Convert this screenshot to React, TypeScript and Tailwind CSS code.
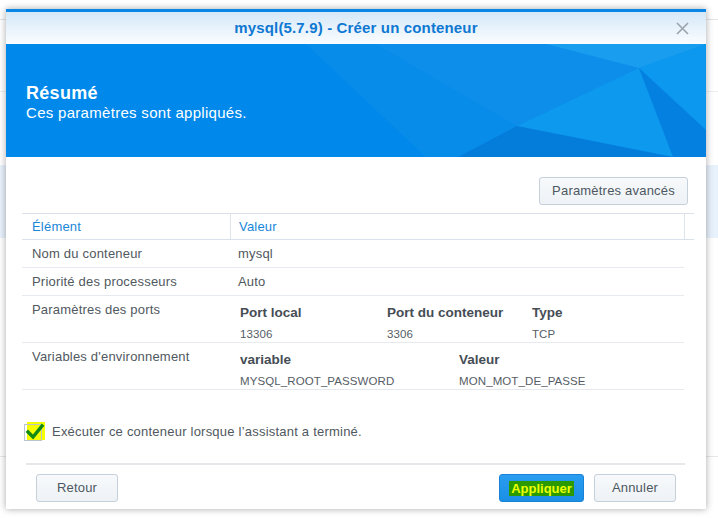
import React from "react";

function Banner() {
  return (
    <div className="relative h-[113px] bg-[#0089ea] overflow-hidden">
      <svg className="absolute inset-0" width="700" height="113" viewBox="0 0 700 113">
        <polygon points="300,0 700,0 700,113 420,113" fill="#ffffff" opacity="0.03" />
        <polygon points="370,0 540,0 633,24 511,82" fill="#ffffff" opacity="0.025" />
        <polygon points="540,0 700,0 633,24" fill="#2fb4f6" opacity="0.45" />
        <polygon points="633,24 700,0 700,86" fill="#0fa2f0" opacity="0.55" />
        <polygon points="633,24 511,82 667,113" fill="#14a8f2" opacity="0.45" />
        <polygon points="511,82 452,113 667,113" fill="#0068c8" opacity="0.45" />
        <polygon points="633,24 667,113 700,113 700,86" fill="#0074d4" opacity="0.45" />
      </svg>
      <div className="relative pl-[20px] pt-[38px] text-white">
        <div className="text-[18px] leading-[22px] font-bold tracking-[0.3px]">Résumé</div>
        <div className="text-[15px] leading-[18px] tracking-[0.3px]">Ces paramètres sont appliqués.</div>
      </div>
    </div>
  );
}

function Btn({ children, w }: { children: React.ReactNode; w: string }) {
  return (
    <div
      className={`${w} h-[28px] flex items-center justify-center rounded-[3px] border border-[#c5d0da] bg-gradient-to-b from-[#f7f9fb] to-[#eef2f6] text-[13px] tracking-[0.2px] text-[#4d5761]`}
    >
      {children}
    </div>
  );
}

export default function App() {
  return (
    <div className="relative w-[718px] h-[519px] overflow-hidden bg-white font-['Liberation_Sans',Arial,sans-serif]">
      {/* page behind the dialog */}
      <div className="absolute inset-0 flex flex-col">
        <div className="h-[20px] border-b border-[#e3e5e8]" />
        <div className="h-[72px] border-b border-[#eceef0]" />
        <div className="h-[73px]" />
        <div className="h-[73px] bg-[#e8f2fc]" />
        <div className="h-[219px] border-b border-[#e6e8ea]" />
      </div>

      {/* dialog */}
      <div className="absolute left-[6px] top-[9px] w-[700px] h-[500px] bg-white flex flex-col shadow-[0_0_7px_rgba(0,0,0,0.35)]">
        <div className="h-[3px] bg-[#0a87e6]" />
        <div className="relative h-[32px] flex items-center justify-center bg-gradient-to-b from-[#d4e8f8] to-[#fbfdff]">
          <span className="text-[15px] font-bold text-[#0f78d2] tracking-[0.15px]">mysql(5.7.9) - Créer un conteneur</span>
          <svg className="absolute right-[17px] top-[10px]" width="13" height="13" viewBox="0 0 13 13">
            <path d="M1 1 L12 12 M12 1 L1 12" stroke="#9aa3ab" strokeWidth="1.6" />
          </svg>
        </div>
        <Banner />

        {/* content */}
        <div className="flex flex-col pt-[20px]">
          <div className="flex justify-end pr-[18px]">
            <Btn w="w-[149px]">Paramètres avancés</Btn>
          </div>

          <div className="mt-[8px] ml-[16px] w-[672px] text-[13px] tracking-[0.2px] text-[#505860]">
            {/* header */}
            <div className="flex h-[27px] border-t border-b border-[#d9e2ea] text-[#1a86d8]">
              <div className="w-[208px] pl-[10px] flex items-center">Élément</div>
              <div className="w-[454px] pl-[8px] border-l border-[#dde4ea] flex items-center">Valeur</div>
              <div className="w-[10px] border-l border-[#dde4ea]" />
            </div>
            <div className="w-[662px]">
              <div className="flex h-[28px] border-b border-[#e6eaee] items-center">
                <div className="w-[208px] pl-[10px]">Nom du conteneur</div>
                <div className="pl-[8px]">mysql</div>
              </div>
              <div className="flex h-[28px] border-b border-[#e6eaee] items-center">
                <div className="w-[208px] pl-[10px]">Priorité des processeurs</div>
                <div className="pl-[8px]">Auto</div>
              </div>
              <div className="flex h-[47px] border-b border-[#e6eaee]">
                <div className="w-[208px] pl-[10px] pt-[6px] leading-[16px]">Paramètres des ports</div>
                <div className="pl-[10px] pt-[9px] flex flex-col">
                  <div className="flex leading-[16px] font-bold text-[13.5px] tracking-normal text-[#454d55]">
                    <div className="w-[147px]">Port local</div>
                    <div className="w-[145px]">Port du conteneur</div>
                    <div>Type</div>
                  </div>
                  <div className="flex mt-[5px] leading-[16px] text-[11.5px] tracking-[0.1px] text-[#555d65]">
                    <div className="w-[147px]">13306</div>
                    <div className="w-[145px]">3306</div>
                    <div>TCP</div>
                  </div>
                </div>
              </div>
              <div className="flex h-[47px] border-b border-[#e6eaee]">
                <div className="w-[208px] pl-[10px] pt-[6px] leading-[16px]">Variables d'environnement</div>
                <div className="pl-[10px] pt-[9px] flex flex-col">
                  <div className="flex leading-[16px] font-bold text-[13.5px] tracking-normal text-[#454d55]">
                    <div className="w-[219px]">variable</div>
                    <div>Valeur</div>
                  </div>
                  <div className="flex mt-[5px] leading-[16px] text-[11.5px] tracking-[0.1px] text-[#555d65]">
                    <div className="w-[219px]">MYSQL_ROOT_PASSWORD</div>
                    <div>MON_MOT_DE_PASSE</div>
                  </div>
                </div>
              </div>
            </div>
          </div>

          {/* checkbox */}
          <div className="mt-[32px] ml-[18px] flex items-center h-[20px]">
            <div className="relative w-[22px] h-[20px]">
              <div className="absolute left-[3px] top-[0px] w-[18px] h-[18px] bg-[#f6ff00]" />
              <div className="absolute left-[0px] top-[2px] w-[18px] h-[17px] border border-[#b9c4cd]" />
              <svg className="absolute left-[1px] top-[1px]" width="20" height="18" viewBox="0 0 20 18">
                <path d="M3 9 L8 14 L17 3" stroke="#138a12" strokeWidth="3.4" fill="none" strokeLinecap="square" />
              </svg>
            </div>
            <span className="ml-[6px] text-[13px] tracking-[0.22px] text-[#505860]">Exécuter ce conteneur lorsque l’assistant a terminé.</span>
          </div>

          {/* footer */}
          <div className="mt-[21px] mx-[20px] w-[659px] h-[2px] bg-[#e5e7ea]" />
          <div className="mt-[9px] flex items-center px-[30px]">
            <Btn w="w-[82px]">Retour</Btn>
            <div className="flex-1" />
            <div className="w-[85px] h-[28px] flex items-center justify-center rounded-[3px] border border-[#1a82d6] bg-gradient-to-b from-[#2a9df0] to-[#1a8fe6]">
              <span className="text-[13px] leading-[13px] font-bold text-[#eaff00] bg-[#2b9a00] px-[2px] py-[1px]">Appliquer</span>
            </div>
            <div className="w-[10px]" />
            <Btn w="w-[82px]">Annuler</Btn>
          </div>
        </div>
      </div>
    </div>
  );
}
